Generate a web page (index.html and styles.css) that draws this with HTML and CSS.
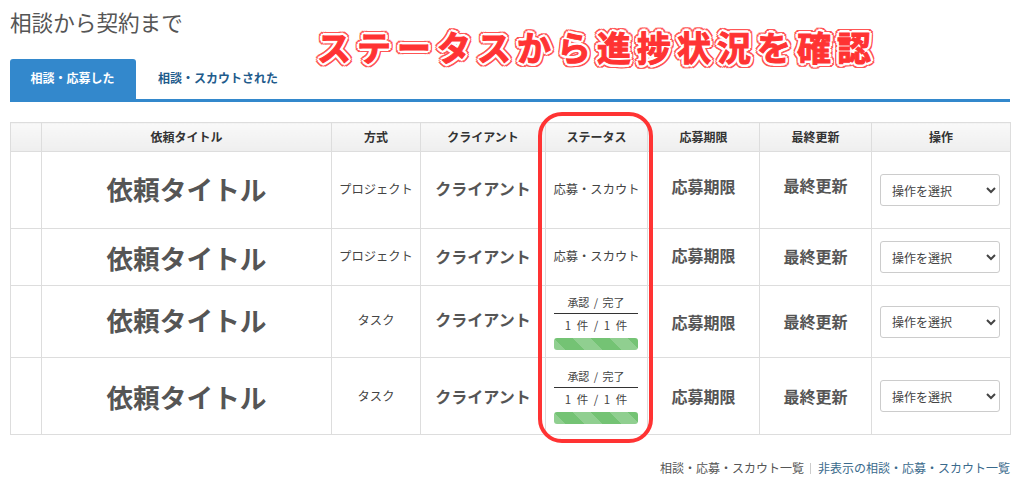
FILE: index.html
```html
<!DOCTYPE html>
<html lang="ja">
<head>
<meta charset="utf-8">
<title>相談から契約まで</title>
<link rel="stylesheet" href="styles.css">
</head>
<body>
<main class="page">
  <h1 class="title">相談から契約まで</h1>
  <nav class="tabs">
    <a class="tab tab-active">相談・応募した</a>
    <a class="tab">相談・スカウトされた</a>
  </nav>
  <table class="list">
    <colgroup>
      <col class="c-check"><col class="c-title"><col class="c-type"><col class="c-client"><col class="c-status"><col class="c-due"><col class="c-updated"><col class="c-action">
    </colgroup>
    <thead>
      <tr><th></th><th>依頼タイトル</th><th>方式</th><th>クライアント</th><th>ステータス</th><th>応募期限</th><th>最終更新</th><th>操作</th></tr>
    </thead>
    <tbody>
      <tr class="r1">
        <td></td><td class="big">依頼タイトル</td><td class="small">プロジェクト</td><td class="mid client">クライアント</td>
        <td class="small">応募・スカウト</td><td class="mid due">応募期限</td><td class="mid updated">最終更新</td>
        <td><select class="op"><option>操作を選択</option></select></td>
      </tr>
      <tr class="r2">
        <td></td><td class="big">依頼タイトル</td><td class="small">プロジェクト</td><td class="mid client">クライアント</td>
        <td class="small">応募・スカウト</td><td class="mid due">応募期限</td><td class="mid updated">最終更新</td>
        <td><select class="op"><option>操作を選択</option></select></td>
      </tr>
      <tr class="r3">
        <td></td><td class="big">依頼タイトル</td><td class="small">タスク</td><td class="mid client">クライアント</td>
        <td class="prog"><div class="p-head">承認 / 完了</div><div class="p-count">1 件 / 1 件</div><div class="bar"></div></td>
        <td class="mid due">応募期限</td><td class="mid updated">最終更新</td>
        <td><select class="op"><option>操作を選択</option></select></td>
      </tr>
      <tr class="r4">
        <td></td><td class="big">依頼タイトル</td><td class="small">タスク</td><td class="mid client">クライアント</td>
        <td class="prog"><div class="p-head">承認 / 完了</div><div class="p-count">1 件 / 1 件</div><div class="bar"></div></td>
        <td class="mid due">応募期限</td><td class="mid updated">最終更新</td>
        <td><select class="op"><option>操作を選択</option></select></td>
      </tr>
    </tbody>
  </table>
  <footer class="links">
    <a>相談・応募・スカウト一覧</a><span class="sep"></span><a class="link2">非表示の相談・応募・スカウト一覧</a>
  </footer>
  <div class="callout">ステータスから進捗状況を確認</div>
  <div class="frame"></div>
</main>
</body>
</html>
```
FILE: styles.css
```css
* { box-sizing: border-box; }
html, body { margin: 0; padding: 0; background: #fff; }
body {
  width: 1020px; height: 484px; overflow: hidden;
  font-family: "Noto Sans CJK JP", "Noto Sans", sans-serif;
  color: #333;
}
.page { position: relative; width: 1020px; height: 484px; padding: 0 10px; }
.title {
  margin: 0; padding-top: 7px; height: 59px;
  font-size: 21.6px; line-height: 30px; font-weight: 400; color: #555;
}
.tabs { display: flex; height: 43px; border-bottom: 3px solid #3388cc; }
.tab {
  display: flex; align-items: center; justify-content: center;
  height: 40px; font-size: 12px; font-weight: 700; color: #1f5c8c;
  padding: 0 20px 4px 22px;
}
.tab-active {
  width: 126px; padding: 0 1px 4px 0; color: #fff; background: #3388cc;
  border-radius: 3px 3px 0 0;
}
.list {
  margin-top: 20px; width: 1000px; table-layout: fixed; border-collapse: collapse;
  border: 1px solid #ddd;
}
.c-check { width: 31px; } .c-title { width: 290px; } .c-type { width: 89px; }
.c-client { width: 125px; } .c-status { width: 102px; } .c-due { width: 112px; }
.c-updated { width: 112px; } .c-action { width: 139px; }
th, td { border: 1px solid #ddd; text-align: center; padding: 0; vertical-align: middle; }
th {
  height: 29px; font-size: 12px; font-weight: 700; color: #333; padding-bottom: 2px;
  background: linear-gradient(#f9f9f9, #eeeeee);
}
.r1 { height: 77px; } .r2 { height: 57px; } .r3 { height: 72px; } .r4 { height: 77px; }
.big { font-size: 26.7px; font-weight: 700; color: #555; }
.mid { font-size: 16px; font-weight: 700; color: #555; }
.small { font-size: 12.3px; color: #444; padding-bottom: 2px; }
.r1 .big { padding-bottom: 4px; }
.r3 .big { padding-bottom: 4px; }
.r1 .client { padding-bottom: 4px; }
.r2 .client { padding-bottom: 2px; }
.r3 .client { padding-bottom: 6px; }
.r1 .due { padding-bottom: 8px; }
.r2 .due { padding-bottom: 4px; }
.r1 .updated { padding-bottom: 10px; }
.r2 .updated { padding-bottom: 2px; }
.r3 .updated { padding-bottom: 2px; }
.r3 .small { padding-bottom: 4px; }
.r4 .small { padding-bottom: 0; }
.prog { padding: 0 9px 0 8px; font-size: 11px; color: #444; word-spacing: 2px; }
.p-head { line-height: 16px; padding-bottom: 3px; border-bottom: 1px solid #333; }
.p-count { line-height: 15px; padding-top: 4px; font-size: 11.5px; word-spacing: 3px; }
.bar {
  height: 12px; margin-top: 5px; border-radius: 3px;
  background-color: #74c374;
  background-image: linear-gradient(45deg, transparent 25%, rgba(255,255,255,.2) 25%, rgba(255,255,255,.2) 50%, transparent 50%, transparent 75%, rgba(255,255,255,.2) 75%);
  background-size: 37px 37px;
}
.op {
  display: block; width: 120px; height: 32px; margin: 0 0 0 8px; padding: 0 0 0 7px;
  font-family: inherit; font-size: 12px; color: #444;
  background: #fff; border: 1px solid #ccc; border-radius: 3px;
}
.links {
  display: flex; justify-content: flex-end; align-items: center;
  margin-top: 24px; font-size: 12px; line-height: 18px; color: #555;
}
.link2 { color: #3a6a8c; }
.sep { width: 1px; height: 11px; background: #ccc; margin: 0 7px 0 6px; }
.callout {
  position: absolute; left: 317px; top: 25px;
  font-size: 34px; line-height: 44px; font-weight: 700; letter-spacing: 6px; white-space: nowrap;
  color: #f33; -webkit-text-stroke: 1px #f33;
  text-shadow:
    3px 0 #fff, -3px 0 #fff, 0 3px #fff, 0 -3px #fff,
    2px 2px #fff, -2px 2px #fff, 2px -2px #fff, -2px -2px #fff,
    4px 0 #f55, -4px 0 #f55, 0 4px #f55, 0 -4px #f55,
    3px 3px #f55, -3px 3px #f55, 3px -3px #f55, -3px -3px #f55,
    4px 2px #f55, -4px 2px #f55, 4px -2px #f55, -4px -2px #f55,
    2px 4px #f55, -2px 4px #f55, 2px -4px #f55, -2px -4px #f55;
}
.frame {
  position: absolute; left: 538px; top: 112px; width: 115px; height: 331px;
  border: 4px solid #f33; border-radius: 24px;
}
```
